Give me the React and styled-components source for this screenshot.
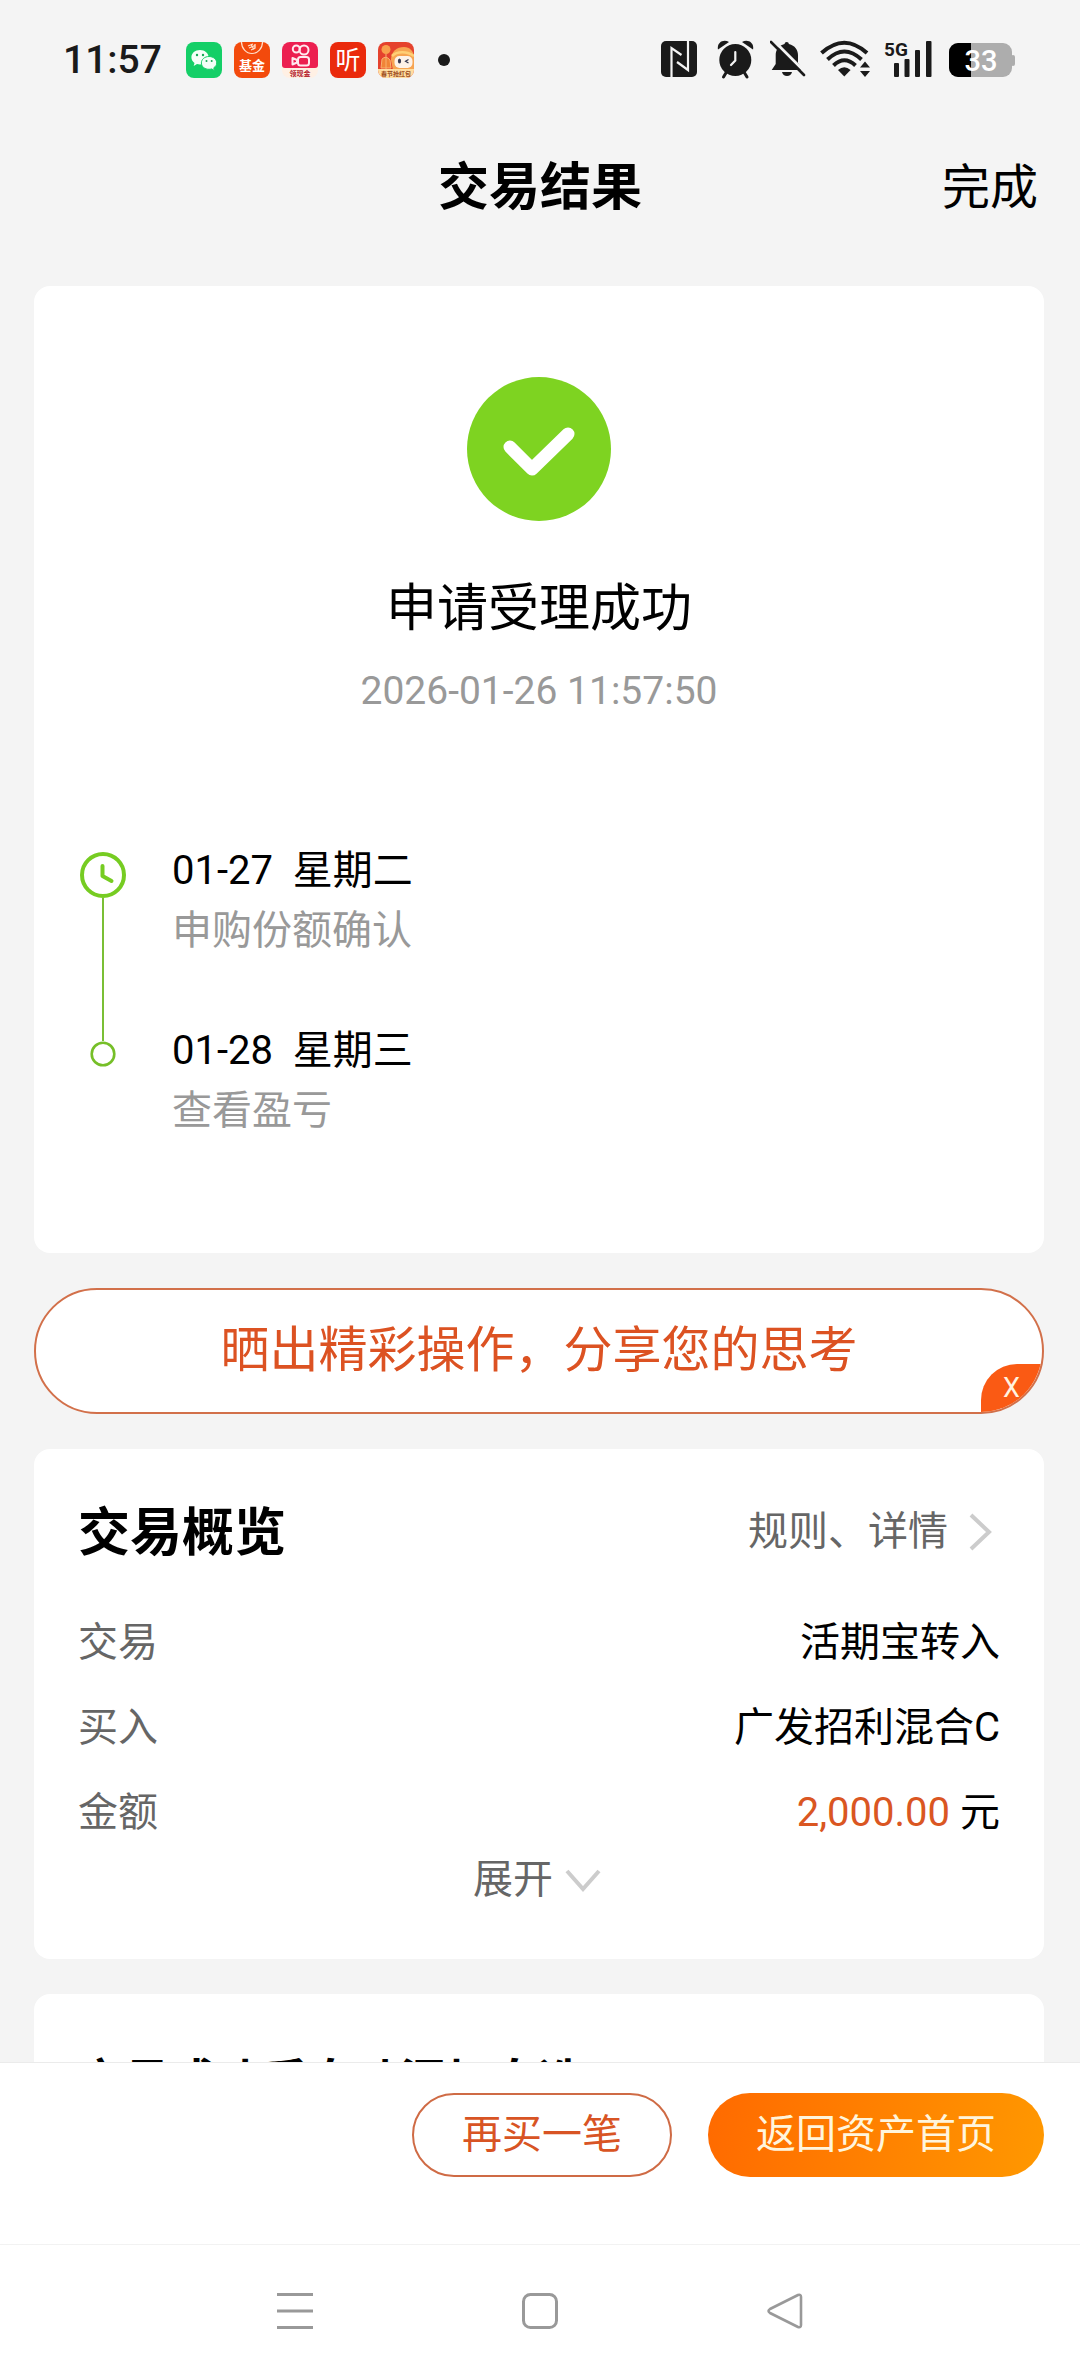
import styled, { createGlobalStyle } from "styled-components";

const GlobalStyle = createGlobalStyle`
    * {
        box-sizing: border-box;
    }
    body {
        margin: 0;
        background: #f4f4f4;
        color: #000;
        font-family: Roboto, "Noto Sans CJK SC", sans-serif;
        font-size: 40px;
        line-height: 60px;
    }
    button {
        border: none;
        background: none;
        padding: 0;
        font: inherit;
        color: inherit;
        cursor: pointer;
    }
    h1, h2, p, dl, dd, ol {
        margin: 0;
        padding: 0;
    }
    svg {
        display: block;
        flex-shrink: 0;
    }
`;

const Page = styled.div`
    height: 100vh;
    display: flex;
    flex-direction: column;
`;

const StatusBar = styled.div`
    height: 120px;
    padding: 0 64px 0 63px;
    display: flex;
    align-items: center;
    justify-content: space-between;
    flex-shrink: 0;
    color: #1a1a1a;
`;

const StatusLeft = styled.div`
    display: flex;
    align-items: center;
    gap: 12px;
`;

const StatusRight = styled.div`
    display: flex;
    align-items: center;
    gap: 14px;
`;

const Time = styled.span`
    font-size: 39px;
    font-weight: 500;
    margin-right: 12px;
`;

const Dot = styled.span`
    width: 12px;
    height: 12px;
    margin-left: 12px;
    border-radius: 50%;
    background: #1a1a1a;
`;

const Header = styled.header`
    height: 136px;
    padding: 0 42px;
    display: grid;
    grid-template-columns: 1fr auto 1fr;
    align-items: center;
    flex-shrink: 0;
`;

const Title = styled.h1`
    grid-column: 2;
    font-size: 51px;
    font-weight: 700;
`;

const DoneButton = styled.button`
    justify-self: end;
    font-size: 48px;
`;

const Main = styled.main`
    flex: 1;
    min-height: 0;
    overflow: hidden;
    padding: 30px 36px 0 34px;
    display: flex;
    flex-direction: column;
    gap: 35px;
`;

const Card = styled.section`
    flex-shrink: 0;
    background: #fff;
    border-radius: 16px;
    padding: ${(props) => props.$padding || "53px 44px 49px"};
`;

const Result = styled.div`
    display: flex;
    flex-direction: column;
    align-items: center;
`;

const ResultTitle = styled.h2`
    margin-top: 56px;
    font-size: 51px;
    font-weight: 400;
    line-height: 64px;
`;

const ResultTime = styled.p`
    margin-top: 20px;
    font-size: 39px;
    color: #999;
`;

const Timeline = styled.ol`
    list-style: none;
    margin-top: 120px;
`;

const Step = styled.li`
    display: flex;
    gap: 46px;
    padding-bottom: ${(props) => (props.$last ? "0" : "60px")};
`;

const StepRail = styled.div`
    position: relative;
    width: 46px;
    padding-top: ${(props) => (props.$last ? "20px" : "11px")};
    display: flex;
    flex-direction: column;
    align-items: center;
`;

const StepLine = styled.span`
    width: 2px;
    flex: 1;
    margin-bottom: -80px;
    background: #7abf35;
`;

const Muted = styled.p`
    color: #999;
`;

const ShareBar = styled.div`
    position: relative;
    height: 126px;
    flex-shrink: 0;
    display: flex;
    border: 2px solid #d2704a;
    border-radius: 63px;
    background: #fff;
    overflow: hidden;
`;

const ShareButton = styled.button`
    flex: 1;
    font-size: 49px;
    color: #dc5222;
`;

const CloseButton = styled.button`
    position: absolute;
    right: 0;
    bottom: 0;
    width: 61px;
    height: 48px;
    border-radius: 36px 0 0 0;
    background: #fa5a14;
    color: #fff3e0;
    font-size: 27px;
    line-height: 48px;
`;

const CardHeader = styled.div`
    display: flex;
    align-items: center;
    justify-content: space-between;
    height: 60px;
`;

const CardTitle = styled.h2`
    padding-top: 4px;
    font-size: ${(props) => (props.$small ? "46px" : "52px")};
    font-weight: 700;
`;

const DetailLink = styled.a`
    display: flex;
    align-items: center;
    gap: 20px;
    padding-right: 8px;
    color: #666;
    text-decoration: none;
`;

const Rows = styled.dl`
    margin-top: 51px;
    display: flex;
    flex-direction: column;
    gap: 25px;
`;

const Row = styled.div`
    display: flex;
    justify-content: space-between;
`;

const Label = styled.dt`
    color: #666;
`;

const Amount = styled.span`
    color: #da5622;
`;

const ExpandButton = styled.button`
    display: flex;
    align-items: center;
    gap: 12px;
    margin: 7px auto 0;
    padding-right: 4px;
    color: #666;
`;

const Footer = styled.footer`
    height: 182px;
    padding: 30px 36px 0;
    display: flex;
    justify-content: flex-end;
    gap: 36px;
    flex-shrink: 0;
    background: #fff;
    border-top: 1px solid #ebebeb;
`;

const PillButton = styled.button`
    height: 84px;
    padding: 0 48px;
    border-radius: 42px;
    border: ${(props) => (props.$primary ? "none" : "2px solid #cf6b45")};
    background: ${(props) => (props.$primary ? "linear-gradient(100deg, #ff6a00, #ff9800)" : "#fff")};
    color: ${(props) => (props.$primary ? "#fff5dc" : "#d85424")};
`;

const SystemNav = styled.nav`
    height: 132px;
    display: flex;
    align-items: center;
    justify-content: center;
    gap: 209px;
    flex-shrink: 0;
    background: #fff;
    border-top: 1px solid #f2f2f2;
`;

const steps = [
    { date: "01-27", day: "星期二", text: "申购份额确认" },
    { date: "01-28", day: "星期三", text: "查看盈亏" },
];

const WechatIcon = () => (
    <svg width="36" height="36" viewBox="0 0 36 36">
        <rect width="36" height="36" rx="8" fill="#14cf67" />
        <path d="M14 8c-5 0-8.600 3.200-8.600 7.300 0 2.400 1.200 4.300 3.100 5.600l-.8 3 3.300-1.800c1 .3 2 .4 3 .4 5 0 8.600-3.200 8.600-7.200S19 8 14 8z" fill="#f4fff8" />
        <path d="M23 14.500c-4.400 0-7.600 2.900-7.600 6.400 0 3.600 3.200 6.400 7.600 6.400.9 0 1.800-.1 2.600-.4l2.900 1.600-.7-2.700c1.800-1.200 2.900-2.900 2.900-4.900 0-3.500-3.300-6.400-7.700-6.400z" fill="#f4fff8" stroke="#14cf67" />
        <g fill="#14a956">
            <circle cx="11" cy="13" r="1.200" />
            <circle cx="17" cy="13" r="1.200" />
            <circle cx="20.500" cy="19" r="1" />
            <circle cx="25.700" cy="19" r="1" />
        </g>
    </svg>
);

const FundIcon = () => (
    <svg width="36" height="36" viewBox="0 0 36 36">
        <rect width="36" height="36" rx="8" fill="#f34a0c" />
        <path d="M7.500 0a10.500 11.500 0 0 0 21 0" fill="none" stroke="#ffe0cc" strokeWidth="1.200" />
        <path d="M14 4l5-2M15 6l6-2.500M17 2.500l3 5M21 2v4l-4 2" fill="none" stroke="#ffe0cc" strokeWidth="1.300" />
        <text x="18" y="28" textAnchor="middle" fontSize="13" fontWeight="700" fill="#fff">基金</text>
    </svg>
);

const VideoIcon = () => (
    <svg width="36" height="36" viewBox="0 0 36 36">
        <rect width="36" height="36" rx="8" fill="#fff0e4" />
        <path d="M8 0h20a8 8 0 0 1 8 8v15q0 3-3 3H3q-3 0-3-3V8a8 8 0 0 1 8-8z" fill="#ec1f50" />
        <g fill="none" stroke="#ffe9ee" strokeWidth="2">
            <circle cx="14.300" cy="7" r="3.500" />
            <circle cx="22" cy="8" r="4.500" />
            <rect x="16" y="15" width="11" height="8.500" rx="2.500" />
            <path d="M15 18l-4.500-2v6.500l4.500-2z" strokeLinejoin="round" />
        </g>
        <text x="18" y="34" textAnchor="middle" fontSize="7" fontWeight="700" fill="#b3202c">领现金</text>
    </svg>
);

const ListenIcon = () => (
    <svg width="36" height="36" viewBox="0 0 36 36">
        <rect width="36" height="36" rx="8" fill="#ea2a0c" />
        <text x="18" y="27" textAnchor="middle" fontSize="25" fill="#fff">听</text>
    </svg>
);

const FestivalIcon = () => (
    <svg width="36" height="36" viewBox="0 0 36 36">
        <defs>
            <clipPath id="festival">
                <rect width="36" height="36" rx="8" />
            </clipPath>
        </defs>
        <g clipPath="url(#festival)">
            <rect width="36" height="36" fill="#e5422d" />
            <circle cx="8" cy="7.500" r="4.500" fill="#f9a04c" />
            <path d="M8 12v16M4 17q4-4 8 1l1 8H3z" fill="#f18437" stroke="#f9b070" />
            <path d="M13 18C13 9 19 5 26 5c6 0 9 4 10 9v14H15z" fill="#f7a552" />
            <path d="M14 14c5-5 15-5 22 0" fill="none" stroke="#ffcf75" strokeWidth="2.500" />
            <rect x="16.500" y="14" width="18" height="12" rx="5" fill="#fdf2e8" />
            <ellipse cx="21.500" cy="19" rx="1.600" ry="2.600" fill="#35384f" />
            <path d="M30.500 17.500l-3 1.800 3 1.800" fill="none" stroke="#35384f" strokeWidth="1.200" />
            <rect y="27" width="36" height="9" fill="#ffdda0" />
            <text x="18" y="34" textAnchor="middle" fontSize="6" fontWeight="700" fill="#9a4a1c">春节抢红包</text>
        </g>
    </svg>
);

const NfcIcon = () => (
    <svg width="36" height="40" viewBox="0 0 36 40">
        <rect y="1" width="36" height="36" rx="5" fill="#1a1a1a" />
        <path d="M10.500 38V8L20.500 15M27 0V30L16 22" fill="none" stroke="#f4f4f4" strokeWidth="2.200" />
    </svg>
);

const AlarmIcon = () => (
    <svg width="45" height="40" viewBox="0 0 45 40">
        <g fill="#1a1a1a">
            <circle cx="24.300" cy="20" r="16" />
            <path d="M7 9.500C5.500 3 12-1.500 18 2z" />
            <path d="M42 9.500C43.500 3 37-1.500 31 2z" />
        </g>
        <path d="M15.500 32l-3 5M33 32l3 5" stroke="#1a1a1a" strokeWidth="3" strokeLinecap="round" />
        <path d="M24.300 12v8.500L20 25" fill="none" stroke="#f4f4f4" strokeWidth="2.200" strokeLinecap="round" />
    </svg>
);

const MuteIcon = () => (
    <svg width="36" height="40" viewBox="0 0 36 40">
        <path d="M16.700 2q2 0 2.200 2C25 5.500 28 10 28 15v8l5 7H1.700l4-6V15C5.700 9.500 9 5.500 14.500 4q.2-2 2.200-2z" fill="#1a1a1a" />
        <path d="M12 32h10q-1 4-5 4t-5-4z" fill="#1a1a1a" />
        <path d="M2-1L36 33" stroke="#f4f4f4" strokeWidth="3" />
        <path d="M1 2l33 33" stroke="#1a1a1a" strokeWidth="2.600" strokeLinecap="round" />
    </svg>
);

const WifiIcon = () => (
    <svg width="50" height="40" viewBox="0 0 50 40">
        <g fill="none" stroke="#1a1a1a" strokeWidth="4">
            <path d="M1.500 13Q24.300-7.500 47 13" />
            <path d="M7.500 19.500Q24.300 3.500 41.500 19.500" />
            <path d="M13.500 25.500Q24.300 15 35.500 25.500" />
        </g>
        <path d="M18 30q6.300-5.500 12.600 0l-6.300 6.500z" fill="#1a1a1a" />
        <path d="M45 21.500l5 6H40zM45 37l5-6H40z" fill="#1a1a1a" />
    </svg>
);

const SignalIcon = () => (
    <svg width="48" height="40" viewBox="0 0 48 40" overflow="visible">
        <g fill="#1a1a1a">
            <rect x="10" y="23" width="5" height="14" rx="1" />
            <rect x="20.500" y="19" width="5" height="18" rx="1" />
            <rect x="31" y="10" width="5" height="27" rx="1" />
            <rect x="42" y="1" width="5.500" height="36" rx="1" />
            <text x="0" y="16" fontSize="19" fontWeight="700">5G</text>
        </g>
    </svg>
);

const BatteryIcon = () => (
    <svg width="70" height="40" viewBox="0 0 70 40">
        <rect x="3" y="3" width="63" height="34" rx="9" fill="#adadad" />
        <rect x="65" y="15" width="4" height="11" rx="2" fill="#adadad" />
        <path d="M25 3H12a9 9 0 0 0-9 9v16a9 9 0 0 0 9 9h13z" fill="#000" />
        <text x="35" y="31" textAnchor="middle" fontSize="29" fontWeight="500" fill="#fff">33</text>
    </svg>
);

const SuccessIcon = () => (
    <svg width="144" height="144" viewBox="0 0 144 144">
        <circle cx="72" cy="72" r="72" fill="#7ed321" />
        <path d="M43 70l22 22 36-35" fill="none" stroke="#fff" strokeWidth="13" strokeLinecap="round" strokeLinejoin="round" />
    </svg>
);

const ClockIcon = () => (
    <svg width="46" height="46" viewBox="0 0 46 46">
        <circle cx="23" cy="23" r="21" fill="#fff" stroke="#76cc22" strokeWidth="4" />
        <path d="M22.500 14v10l9 5" fill="none" stroke="#76cc22" strokeWidth="4" strokeLinecap="round" strokeLinejoin="round" />
    </svg>
);

const RingIcon = () => (
    <svg width="26" height="26" viewBox="0 0 26 26">
        <circle cx="13" cy="13" r="11.300" fill="#fff" stroke="#76bf28" strokeWidth="2.600" />
    </svg>
);

const App = () => {
    return (
        <Page>
            <GlobalStyle />
            <StatusBar>
                <StatusLeft>
                    <Time>11:57</Time>
                    <WechatIcon />
                    <FundIcon />
                    <VideoIcon />
                    <ListenIcon />
                    <FestivalIcon />
                    <Dot />
                </StatusLeft>
                <StatusRight>
                    <NfcIcon />
                    <AlarmIcon />
                    <MuteIcon />
                    <WifiIcon />
                    <SignalIcon />
                    <BatteryIcon />
                </StatusRight>
            </StatusBar>
            <Header>
                <Title>交易结果</Title>
                <DoneButton>完成</DoneButton>
            </Header>
            <Main>
                <Card $padding="91px 46px 112px">
                    <Result>
                        <SuccessIcon />
                        <ResultTitle>申请受理成功</ResultTitle>
                        <ResultTime>2026-01-26 11:57:50</ResultTime>
                    </Result>
                    <Timeline>
                        {steps.map((step, index) => {
                            const last = index === steps.length - 1;
                            return (
                                <Step key={step.date} $last={last}>
                                    <StepRail $last={last}>
                                        {last ? <RingIcon /> : <ClockIcon />}
                                        {!last && <StepLine />}
                                    </StepRail>
                                    <div>
                                        <p>{step.date}&nbsp; {step.day}</p>
                                        <Muted>{step.text}</Muted>
                                    </div>
                                </Step>
                            );
                        })}
                    </Timeline>
                </Card>
                <ShareBar>
                    <ShareButton>晒出精彩操作，分享您的思考</ShareButton>
                    <CloseButton>X</CloseButton>
                </ShareBar>
                <Card>
                    <CardHeader>
                        <CardTitle>交易概览</CardTitle>
                        <DetailLink href="#detail">
                            规则、详情
                            <svg width="24" height="38" viewBox="0 0 24 38">
                                <path d="M3 2l18 17L3 36" fill="none" stroke="#ccc" strokeWidth="4" />
                            </svg>
                        </DetailLink>
                    </CardHeader>
                    <Rows>
                        <Row>
                            <Label>交易</Label>
                            <dd>活期宝转入</dd>
                        </Row>
                        <Row>
                            <Label>买入</Label>
                            <dd>广发招利混合C</dd>
                        </Row>
                        <Row>
                            <Label>金额</Label>
                            <dd><Amount>2,000.00</Amount> 元</dd>
                        </Row>
                    </Rows>
                    <ExpandButton>
                        展开
                        <svg width="36" height="24" viewBox="0 0 36 24">
                            <path d="M2 3l16 18L34 3" fill="none" stroke="#ccc" strokeWidth="4" />
                        </svg>
                    </ExpandButton>
                </Card>
                <Card>
                    <CardTitle $small>交易成功后自动添加自选</CardTitle>
                </Card>
            </Main>
            <Footer>
                <PillButton>再买一笔</PillButton>
                <PillButton $primary>返回资产首页</PillButton>
            </Footer>
            <SystemNav>
                <button aria-label="菜单">
                    <svg width="36" height="36" viewBox="0 0 36 36">
                        <path d="M0 1.500h36M0 18h36M0 34.500h36" stroke="#999" strokeWidth="3" />
                    </svg>
                </button>
                <button aria-label="主页">
                    <svg width="36" height="36" viewBox="0 0 36 36">
                        <rect x="1.500" y="1.500" width="33" height="33" rx="7" fill="none" stroke="#999" strokeWidth="3" />
                    </svg>
                </button>
                <button aria-label="返回">
                    <svg width="36" height="36" viewBox="0 0 36 36">
                        <path d="M31 2Q34 1 34 4V32Q34 35 31 34L3 20Q0 18 3 16z" fill="none" stroke="#999" strokeWidth="2.600" strokeLinejoin="round" />
                    </svg>
                </button>
            </SystemNav>
        </Page>
    );
};

export default App;
